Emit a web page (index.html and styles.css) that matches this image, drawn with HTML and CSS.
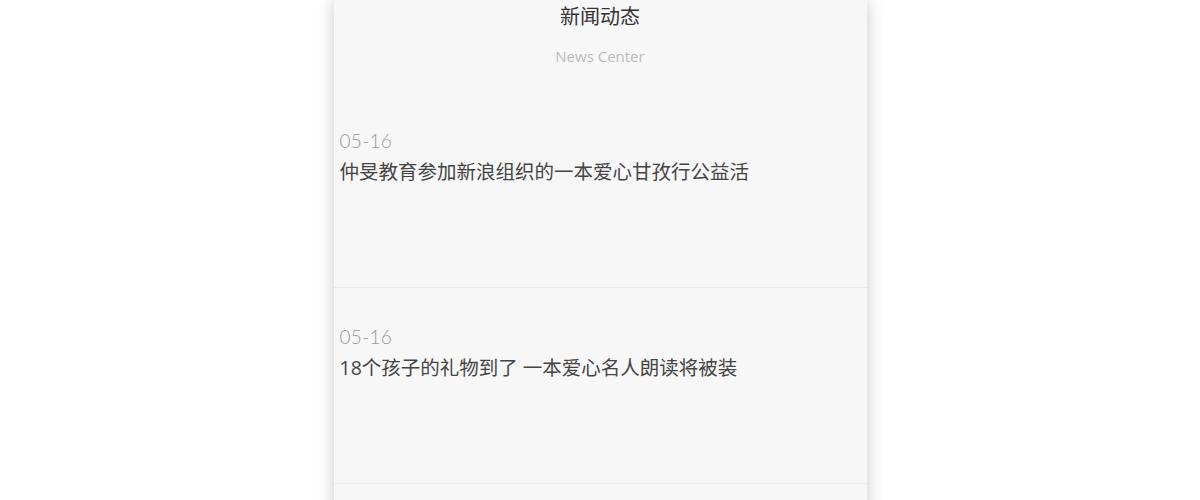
FILE: index.html
```html
<!DOCTYPE html>
<html lang="zh-CN">
<head>
    <meta charset="UTF-8">
    <meta name="viewport" content="width=device-width, initial-scale=1.0">
    <title>新闻动态</title>
    <link rel="stylesheet" href="styles.css">
</head>
<body>
    <div class="page">
        <div class="news-head">
            <h2>新闻动态</h2>
            <p>News Center</p>
        </div>
        <ul class="news-list">
            <li class="news-item">
                <div class="news-date">05-16</div>
                <div class="news-title">仲旻教育参加新浪组织的一本爱心甘孜行公益活</div>
            </li>
            <li class="news-item">
                <div class="news-date">05-16</div>
                <div class="news-title">18个孩子的礼物到了 一本爱心名人朗读将被装</div>
            </li>
        </ul>
    </div>
</body>
</html>
```

FILE: styles.css
```css
body {
    margin: 0;
    padding: 0;
    background: #ffffff;
    font-family: "Open Sans", "Noto Sans CJK SC", sans-serif;
}
.page {
    width: 533px;
    min-height: 800px;
    margin: 0 auto;
    background-color: #f7f7f7;
    box-shadow: 0 0 16px rgba(0, 0, 0, 0.22);
}
.news-head {
    padding: 2px 0 26px;
    text-align: center;
}
.news-head h2 {
    margin: 0;
    font-size: 20px;
    line-height: 30px;
    font-weight: normal;
    color: #333;
}
.news-head p {
    margin: 14px 0 0;
    font-size: 15px;
    line-height: 20px;
    color: #bbb;
}
.news-list {
    list-style: none;
    margin: 0;
    padding: 0;
}
.news-item {
    height: 196px;
    padding: 37px 6px 0;
    box-sizing: border-box;
    border-bottom: 1px solid #ebebeb;
}
.news-date {
    font-family: "Lato", sans-serif;
    font-weight: 300;
    font-size: 19px;
    letter-spacing: 0.3px;
    line-height: 24px;
    color: #999;
}
.news-title {
    margin-top: 4px;
    font-size: 19.5px;
    line-height: 30px;
    color: #444;
}
```
